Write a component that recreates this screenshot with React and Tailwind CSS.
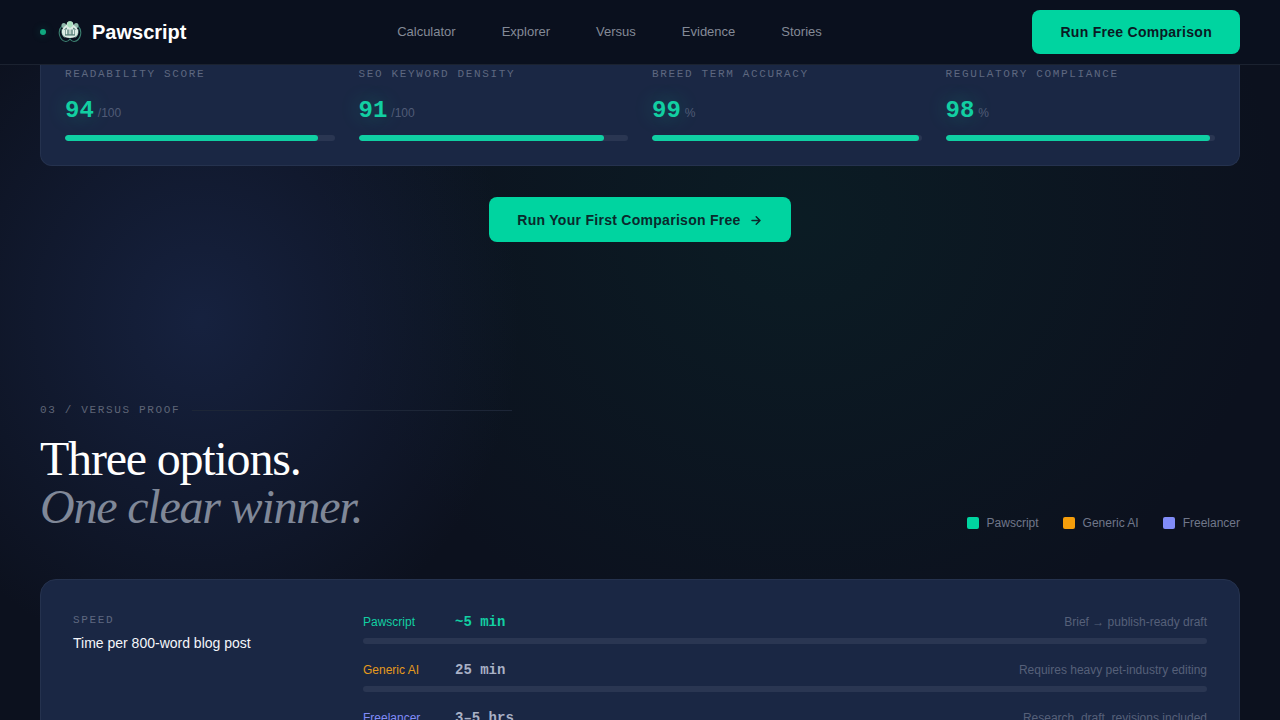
const NAV_LINKS = ["Calculator", "Explorer", "Versus", "Evidence", "Stories"];

const METRICS = [
  { label: "Readability Score", value: 94, unit: "/100" },
  { label: "SEO Keyword Density", value: 91, unit: "/100" },
  { label: "Breed Term Accuracy", value: 99, unit: "%" },
  { label: "Regulatory Compliance", value: 98, unit: "%" },
];

const LEGEND = [
  { name: "Pawscript", swatch: "bg-[#00d4a0]" },
  { name: "Generic AI", swatch: "bg-[#f59e0b]" },
  { name: "Freelancer", swatch: "bg-[#818cf8]" },
];

const SPEED_ROWS = [
  { name: "Pawscript", value: "~5 min", note: "Brief → publish-ready draft", nameClass: "text-[#12cfa2]", valueClass: "text-[#12cfa2]" },
  { name: "Generic AI", value: "25 min", note: "Requires heavy pet-industry editing", nameClass: "text-[#e59a1c]", valueClass: "text-[#a9b1c6]" },
  { name: "Freelancer", value: "3–5 hrs", note: "Research, draft, revisions included", nameClass: "text-[#818cf8]", valueClass: "text-[#a9b1c6]" },
];

function LogoMark() {
  return (
    <svg className="w-6 h-6" viewBox="0 0 24 24" fill="none" aria-hidden="true">
      {/* outer lobes */}
      <path d="M4 6C1.500 8.500.8 12 1.500 15c.8 3.400 3.500 6.200 6.300 6.500 1.900.1 3.200-1 4.200-2.500 1 1.500 2.300 2.600 4.200 2.500 2.800-.3 5.500-3.100 6.300-6.500.7-3 0-6.500-2.500-9" stroke="#3c7f70" strokeWidth="1.100" />
      <path d="M4.200 9c-.8 3.500 0 6.500 2.300 8.500M19.800 9c.8 3.500 0 6.500-2.300 8.500" stroke="#5d9a89" />
      {/* pads */}
      <ellipse cx="5.800" cy="5.600" rx="2.300" ry="2.600" fill="#8fb8a9" />
      <ellipse cx="18.200" cy="5.600" rx="2.300" ry="2.600" fill="#8fb8a9" />
      <path d="M9 3.200C9.500.8 14.500.8 15 3.200c.5 1.700 1.300 2.600 2.800 3.600 2.400 1.800 3 5.400 1.600 8-1.300 2.300-3.600 3.200-7.400 3.200s-6.100-.9-7.400-3.200c-1.400-2.600-.8-6.200 1.600-8C7.700 5.800 8.500 4.900 9 3.200Z" fill="#dcebe4" />
      <path d="M9.500 2.200c1-1.300 4-1.300 5 0l.3 3.800-2.800 2-2.800-2Z" fill="#a9dfbe" />
      {/* screen */}
      <path d="M7 9.500h10v5.500H7Z" fill="#7f9f98" />
      <path d="M8.500 10v4.500M12 9v5.500M15.500 10v4.500" stroke="#e6f1ec" strokeWidth="1.100" />
      <path d="M6.500 9.500 9 8M17.500 9.500 15 8M7 15h10" stroke="#46736a" />
    </svg>
  );
}

function Header() {
  return (
    <header className="shrink-0 bg-[#0a101e] border-b border-[#1b2230] px-10">
      <div className="flex items-center justify-between h-16">
        <a href="#top" className="flex items-center">
          <span className="w-1.5 h-1.5 rounded-full bg-[#10a87f] mr-3 shadow-[0_0_8px_rgba(0,212,160,0.25)]" />
          <LogoMark />
          <span className="ml-2.5 text-xl font-bold text-white">Pawscript</span>
        </a>
        <nav className="flex gap-[46px]">
          {NAV_LINKS.map((link) => (
            <a key={link} href={`#${link.toLowerCase()}`} className="text-[13px] leading-5 text-[#848a97]">
              {link}
            </a>
          ))}
        </nav>
        <button type="button" className="h-11 px-7 rounded-lg bg-[#00d4a0] text-sm font-bold tracking-[0.02em] text-[#0a1a24]">
          Run Free Comparison
        </button>
      </div>
    </header>
  );
}

function MetricCard() {
  return (
    <section className="grid grid-cols-4 gap-6 px-6 pt-px pb-6 bg-[#1a2744] border border-t-0 border-[#25324e] rounded-b-xl">
      {METRICS.map(({ label, value, unit }) => (
        <div key={label}>
          <p className="font-['Liberation_Mono',monospace] text-[11px] leading-4 uppercase tracking-[0.15em] text-[#5e6880]">{label}</p>
          <div className="flex items-baseline gap-1 mt-4">
            <span className="font-['Liberation_Mono',monospace] text-2xl leading-[26px] font-bold text-[#12cfa2] [text-shadow:0_0_20px_rgba(0,212,160,0.3)]">{value}</span>
            <span className="text-xs text-[#505b76]">{unit}</span>
          </div>
          <div className="h-1.5 mt-[11px] rounded-full bg-[#2a3652] overflow-hidden">
            <div className="h-full rounded-full bg-[#10cfa3]" style={{ width: `${value}%` }} />
          </div>
        </div>
      ))}
    </section>
  );
}

function VersusRow({ name, value, note, nameClass, valueClass }) {
  return (
    <div>
      <div className="flex items-center gap-3 leading-5">
        <span className={`w-20 text-xs leading-5 ${nameClass}`}>{name}</span>
        <span className={`font-['Liberation_Mono',monospace] text-sm font-bold ${valueClass}`}>{value}</span>
        <span className="ml-auto text-xs leading-5 text-[#566079]">{note}</span>
      </div>
      <div className="h-1.5 mt-1.5 rounded-full bg-[#2a3652]" />
    </div>
  );
}

export default function App() {
  return (
    <div
      id="top"
      className="flex flex-col h-screen overflow-hidden font-['Liberation_Sans',Arial,sans-serif] bg-[#0c111e] bg-[radial-gradient(ellipse_320px_350px_at_200px_320px,rgba(36,56,108,0.42),rgba(36,56,108,0)),radial-gradient(ellipse_480px_440px_at_800px_220px,rgba(8,60,54,0.26),rgba(8,60,54,0))]"
    >
      <Header />
      <main className="px-10">
        <MetricCard />

        <div className="flex justify-center mt-[31px]">
          <button type="button" className="flex items-center gap-2 h-[45px] px-7 rounded-lg bg-[#00d4a0] text-sm font-bold tracking-[0.02em] text-[#0a2a2c]">
            Run Your First Comparison Free
            <svg className="w-3.5 h-3.5" viewBox="0 0 14 14" fill="none" stroke="currentColor" strokeWidth="1.500" strokeLinecap="round" strokeLinejoin="round" aria-hidden="true">
              <path d="M3 7.500h8M7.200 3.700l3.800 3.800-3.800 3.800" />
            </svg>
          </button>
        </div>

        <section id="versus" className="mt-40">
          <div className="flex items-center gap-3">
            <p className="font-['Liberation_Mono',monospace] text-[11px] leading-4 uppercase tracking-[0.15em] text-[#5e6576]">03 / Versus Proof</p>
            <div className="w-80 h-px bg-[#1d2637]" />
          </div>
          <div className="flex items-end justify-between mt-[17px]">
            <h2 className="font-['Liberation_Serif',serif] text-5xl leading-[48px] tracking-tight text-white">
              Three options.
              <br />
              <em className="text-[#808898]">One clear winner.</em>
            </h2>
            <ul className="flex gap-6">
              {LEGEND.map(({ name, swatch }) => (
                <li key={name} className="flex items-center gap-2 text-xs text-[#70778a]">
                  <span className={`w-3 h-3 rounded-xs ${swatch}`} />
                  {name}
                </li>
              ))}
            </ul>
          </div>

          <div className="grid grid-cols-[250px_1fr] gap-10 mt-12 p-8 bg-[#1a2744] border border-[#25324e] rounded-2xl">
            <div>
              <p className="font-['Liberation_Mono',monospace] text-[11px] leading-4 uppercase tracking-[0.15em] text-[#5e6880]">Speed</p>
              <h3 className="mt-1 text-sm leading-[22px] text-[#f4f6fa]">Time per 800-word blog post</h3>
            </div>
            <div className="flex flex-col gap-4">
              {SPEED_ROWS.map((row) => (
                <VersusRow key={row.name} {...row} />
              ))}
            </div>
          </div>
        </section>
      </main>
    </div>
  );
}
